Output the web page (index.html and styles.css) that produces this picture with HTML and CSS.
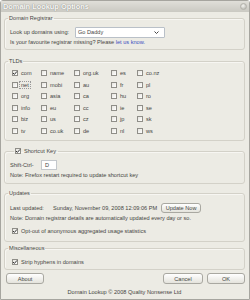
FILE: index.html
```html
<!DOCTYPE html>
<html>
<head>
<meta charset="utf-8">
<link rel="stylesheet" href="styles.css">
</head>
<body>
<div class="window">
  <div class="titlebar"><span class="title">Domain Lookup Options</span><span class="close"></span></div>
  <div class="content">
    <fieldset class="box reg">
      <legend>Domain Registrar</legend>
      <div class="row r-select"><span class="lbl">Look up domains using:</span><div class="select"><span>Go Daddy</span><svg width="5" height="3" viewBox="0 0 5 3"><path d="M0.5 0.5 L2.5 2.5 L4.5 0.5" fill="none" stroke="#444" stroke-width="1"/></svg></div></div>
      <div class="r-text">Is your favourite registrar missing? Please <a class="link">let us know.</a></div>
    </fieldset>

    <fieldset class="box tlds">
      <legend>TLDs</legend>
      <div class="grid">
        <label class="cb"><span class="check on"><svg width="6" height="6" viewBox="0 0 6 6"><path d="M1 3 L2.4 4.4 L5 1.4" fill="none" stroke="#333" stroke-width="1"/></svg></span>com</label>
        <label class="cb"><span class="check"></span>name</label>
        <label class="cb"><span class="check"></span>org.uk</label>
        <label class="cb"><span class="check"></span>es</label>
        <label class="cb"><span class="check"></span>co.nz</label>
        <label class="cb"><span class="check"></span><span class="focus">net</span></label>
        <label class="cb"><span class="check"></span>mobi</label>
        <label class="cb"><span class="check"></span>au</label>
        <label class="cb"><span class="check"></span>fr</label>
        <label class="cb"><span class="check"></span>pl</label>
        <label class="cb"><span class="check"></span>org</label>
        <label class="cb"><span class="check"></span>asia</label>
        <label class="cb"><span class="check"></span>ca</label>
        <label class="cb"><span class="check"></span>hu</label>
        <label class="cb"><span class="check"></span>ro</label>
        <label class="cb"><span class="check"></span>info</label>
        <label class="cb"><span class="check"></span>eu</label>
        <label class="cb"><span class="check"></span>cc</label>
        <label class="cb"><span class="check"></span>ie</label>
        <label class="cb"><span class="check"></span>se</label>
        <label class="cb"><span class="check"></span>biz</label>
        <label class="cb"><span class="check"></span>us</label>
        <label class="cb"><span class="check"></span>cz</label>
        <label class="cb"><span class="check"></span>jp</label>
        <label class="cb"><span class="check"></span>sk</label>
        <label class="cb"><span class="check"></span>tv</label>
        <label class="cb"><span class="check"></span>co.uk</label>
        <label class="cb"><span class="check"></span>de</label>
        <label class="cb"><span class="check"></span>nl</label>
        <label class="cb"><span class="check"></span>ws</label>
      </div>
    </fieldset>

    <fieldset class="box shortcut">
      <legend class="cb-legend"><span class="check on"><svg width="6" height="6" viewBox="0 0 6 6"><path d="M1 3 L2.4 4.4 L5 1.4" fill="none" stroke="#333" stroke-width="1"/></svg></span>Shortcut Key</legend>
      <div class="row r-input"><span class="lbl2">Shift-Ctrl-</span><span class="input">D</span></div>
      <div class="r-text">Note: Firefox restart required to update shortcut key</div>
    </fieldset>

    <fieldset class="box updates">
      <legend>Updates</legend>
      <div class="row r-upd"><span class="lbl3">Last updated:</span><span>Sunday, November 09, 2008 12:09:06 PM</span><span class="btn upd">Update Now</span></div>
      <div class="r-text">Note: Domain registrar details are automatically updated every day or so.</div>
      <label class="row cb r-opt"><span class="check on"><svg width="6" height="6" viewBox="0 0 6 6"><path d="M1 3 L2.4 4.4 L5 1.4" fill="none" stroke="#333" stroke-width="1"/></svg></span>Opt-out of anonymous aggregated usage statistics</label>
    </fieldset>

    <fieldset class="box misc">
      <legend>Miscellaneous</legend>
      <label class="row cb r-opt2"><span class="check on"><svg width="6" height="6" viewBox="0 0 6 6"><path d="M1 3 L2.4 4.4 L5 1.4" fill="none" stroke="#333" stroke-width="1"/></svg></span>Strip hyphens in domains</label>
    </fieldset>

    <div class="buttons">
      <span class="btn about">About</span>
      <span class="spacer"></span>
      <span class="btn cancel">Cancel</span>
      <span class="btn ok">OK</span>
    </div>
    <div class="footer">Domain Lookup © 2008 Quality Nonsense Ltd</div>
  </div>
</div>
</body>
</html>
```

FILE: styles.css
```css
* { box-sizing: border-box; }
html, body { margin: 0; padding: 0; }
body {
  width: 250px; height: 300px; background: #ffffff;
  font-family: "Liberation Sans", Arial, sans-serif;
  font-size: 5.6px; color: #454542;
}
.window {
  width: 250px; height: 300px; background: #ecebe4;
  border: 1px solid #a6a59f; border-radius: 3px 3px 0 0;
  display: flex; flex-direction: column;
}
.titlebar {
  height: 11px; flex: none;
  background: linear-gradient(#e0dfd9, #cac9c2);
  display: flex; align-items: center; justify-content: space-between;
  padding: 0 2px 0 2px;
}
.title {
  font-weight: bold; font-size: 7.4px; color: #f8f8f6;
  text-shadow: 0 0 1px #8e8d87, 0 0 1px #a09f99;
}
.close {
  width: 7px; height: 7px; border-radius: 50%;
  background: radial-gradient(circle at 40% 35%, #f4f4f0, #aeada6);
  border: 1px solid #b3b2ab;
}
.content { flex: 1; padding: 2px 4px 0 3px; display: flex; flex-direction: column; }
fieldset {
  margin: 0; padding: 0 5px; min-width: 0;
  border: 1px solid #d3d1c8; border-radius: 3px;
  box-shadow: inset 1px 1px 0 #f7f6f2;
}
legend { padding: 0 1px; margin-left: -2px; line-height: 8px; height: 8px; }
.reg { height: 36px; }
.tlds { height: 84px; margin-top: 7px; }
.shortcut { height: 37px; margin-top: 6px; }
.updates { height: 53px; margin-top: 5px; }
.misc { height: 26px; margin-top: 2px; }

.row { display: flex; align-items: center; }
.r-select { margin-top: 4px; height: 12px; }
.r-text { height: 9px; line-height: 9px; white-space: nowrap; }
.lbl { width: 65px; }
.select {
  width: 90px; height: 11px; background: #fff;
  border: 1px solid #b9c0c8; border-radius: 1px;
  display: flex; align-items: center; justify-content: space-between;
  padding: 0 5px 0 2px;
}
.link { color: #3b4fc0; }

.grid {
  display: grid; padding-top: 2.5px;
  grid-template-columns: 29px 33px 37px 26px auto;
  grid-auto-rows: 11.5px; margin-left: 2px;
}
.cb { display: flex; align-items: center; }
.check {
  width: 6px; height: 6px; flex: none; margin-right: 3px;
  background: linear-gradient(135deg, #e6e5df, #ffffff);
  border: 1px solid #8f8e88; position: relative;
}
.check svg { position: absolute; left: -1px; top: -1px; }
.focus { outline: 1px dotted #999; outline-offset: 0; padding: 0 1px; margin-left: -1px; }

.cb-legend { display: flex; align-items: center; margin-left: 4px; padding: 0 2px 0 1px; }
.r-input { margin-top: 4px; height: 12px; }
.lbl2 { width: 31px; }
.input {
  width: 16px; height: 10px; background: #fff;
  border: 1px solid #c4c8cc; padding-left: 3px; line-height: 8px;
}

.r-upd { margin-top: 5px; height: 12px; }
.lbl3 { width: 43px; }
.btn {
  display: flex; align-items: center; justify-content: center;
  height: 11px; border: 1px solid #a9a8a1; border-radius: 3px;
  background: linear-gradient(#ffffff, #e4e3dc);
}
.upd { width: 40px; margin-left: 4px; height: 10px; }
.r-opt { margin-top: 3px; height: 10px; margin-left: 2px; }
.r-opt2 { margin-top: 5px; height: 10px; margin-left: 2px; }

.buttons { display: flex; margin-top: 3px; height: 11px; }
.about { width: 38px; margin-left: 2px; }
.spacer { flex: 1; }
.cancel { width: 40px; }
.ok { width: 38px; margin-left: 4px; }
.footer { text-align: center; margin-top: 4px; line-height: 8px; }
```
